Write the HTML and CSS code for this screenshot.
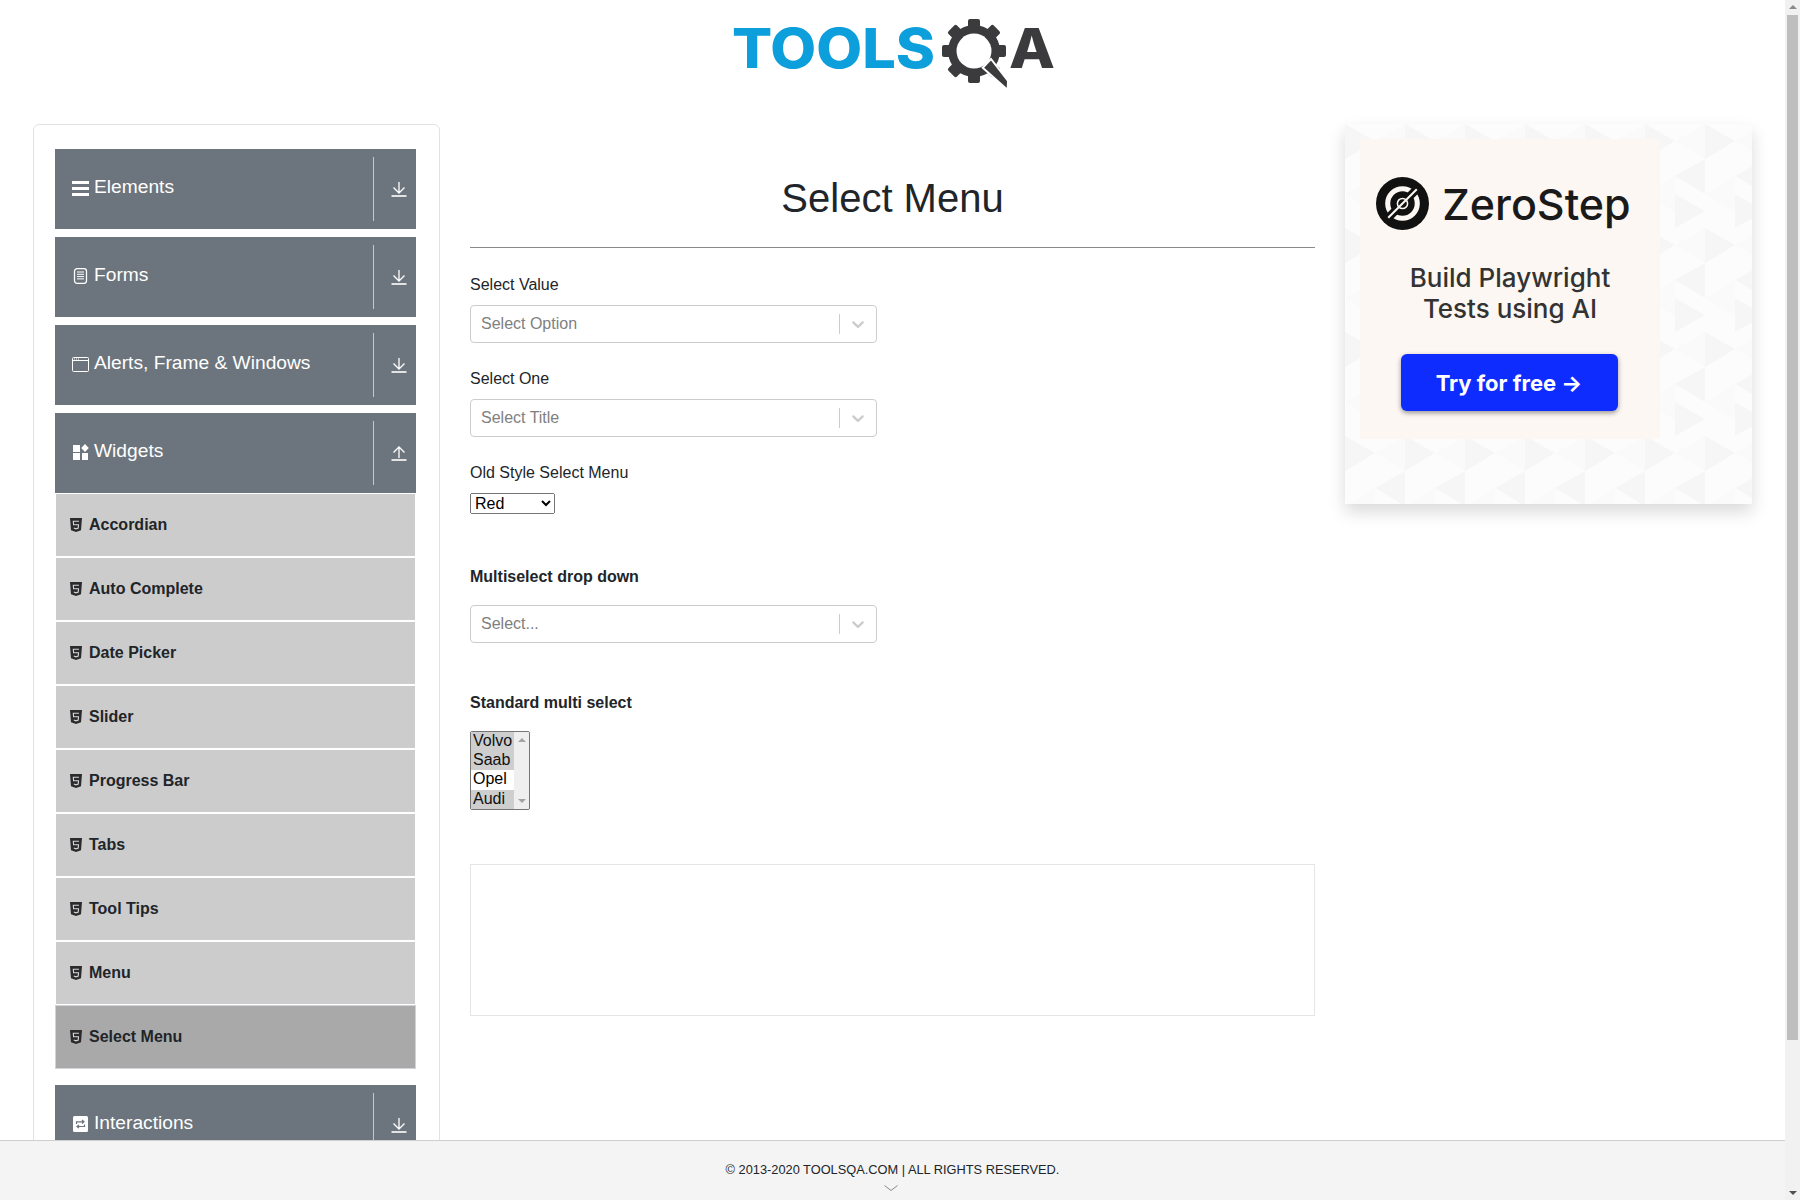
FILE: index.html
```html
<!DOCTYPE html>
<html lang="en">
<head>
    <meta charset="UTF-8">
    <title>ToolsQA</title>
    <link rel="stylesheet" href="styles.css">
</head>
<body>
    <svg class="iconDefs" width="0" height="0">
        <symbol id="down" viewBox="0 0 16 16"><path d="M8 1v10.500M2.500 6.500 8 12l5.500-5.500" fill="none" stroke="currentColor" stroke-width="1.300"/><path d="M.5 15h15" stroke="currentColor" stroke-width="1.600"/></symbol>
        <symbol id="up" viewBox="0 0 16 16"><path d="M8 13V2M2.500 7.500 8 2l5.500 5.500" fill="none" stroke="currentColor" stroke-width="1.300"/><path d="M.5 15h15" stroke="currentColor" stroke-width="1.600"/></symbol>
        <symbol id="html5" viewBox="0 0 12 14"><path d="M0 0h12l-1 12.300L6 14l-5-1.700z" fill="#2b2b2e"/><path d="M9 3.200H3.300l.3 3.500h4.900l-.3 3.300L6 10.800 3.800 10" fill="none" stroke="#d8d8d8" stroke-width="1.100"/></symbol>
        <symbol id="chev" viewBox="0 0 20 20"><path d="M4.516 7.548c.436-.446 1.043-.481 1.576 0L10 11.295l3.908-3.747c.533-.481 1.141-.446 1.574 0 .436.445.408 1.197 0 1.615-.406.418-4.695 4.502-4.695 4.502-.217.223-.502.335-.787.335s-.570-.112-.789-.335c0 0-4.287-4.084-4.695-4.502s-.436-1.170 0-1.615z"/></symbol>
        <pattern id="tri" width="60" height="104" patternUnits="userSpaceOnUse">
            <path d="M0 0 30 17 0 35zM60 35 30 52 60 70zM30 70 60 87 30 104z" fill="#f6f6f6"/>
            <path d="M30 17 60 0v35zM0 70l30-18v36z" fill="#fafafa"/>
        </pattern>
    </svg>

    <div class="scrollArea">
        <header class="topBar">
            <svg class="logo" viewBox="0 0 322 80" width="322" height="80">
                <text class="logoTools" x="-1" y="54" textLength="203" lengthAdjust="spacingAndGlyphs">TOOLS</text>
                <g class="gear" transform="translate(241 37)">
                    <circle r="26"/>
                    <rect x="-6" y="-32" width="12" height="64" rx="2"/>
                    <rect x="-6" y="-32" width="12" height="64" rx="2" transform="rotate(45)"/>
                    <rect x="-6" y="-32" width="12" height="64" rx="2" transform="rotate(90)"/>
                    <rect x="-6" y="-32" width="12" height="64" rx="2" transform="rotate(135)"/>
                    <circle r="17.500" fill="#fff"/>
                </g>
                <path class="handle" d="M258 45 249.700 53.700 274.700 76 275 67Z"/>
                <text class="logoA" x="276" y="54" textLength="46" lengthAdjust="spacingAndGlyphs">A</text>
            </svg>
        </header>

        <div class="pageBody">
            <aside class="sideCard">
                <div class="group">
                    <div class="groupHeader">
                        <span class="groupIcon">
                            <svg width="17" height="15" viewBox="0 0 17 15"><path d="M0 0h17v3H0zM0 6h17v3H0zM0 12h17v3H0z" fill="currentColor"/></svg>
                        </span>
                        <span class="groupName">Elements</span>
                        <span class="groupToggle"><svg width="16" height="16"><use href="#down"/></svg></span>
                    </div>
                </div>
                <div class="group">
                    <div class="groupHeader">
                        <span class="groupIcon">
                            <svg width="17" height="16" viewBox="0 0 17 16"><rect x="2.500" y=".7" width="12" height="14.600" rx="2.500" fill="none" stroke="currentColor" stroke-width="1.300"/><path d="M5 4h7M5 6.300h7M5 8.600h7M5 10.900h7" stroke="currentColor"/></svg>
                        </span>
                        <span class="groupName">Forms</span>
                        <span class="groupToggle"><svg width="16" height="16"><use href="#down"/></svg></span>
                    </div>
                </div>
                <div class="group">
                    <div class="groupHeader">
                        <span class="groupIcon">
                            <svg width="17" height="15" viewBox="0 0 17 15"><rect x=".5" y=".5" width="16" height="14" rx="1" fill="none" stroke="currentColor"/><path d="M.5 3.500h16" stroke="currentColor"/><path d="M2 2h1M4 2h1M6 2h1" stroke="currentColor"/></svg>
                        </span>
                        <span class="groupName">Alerts, Frame &amp; Windows</span>
                        <span class="groupToggle"><svg width="16" height="16"><use href="#down"/></svg></span>
                    </div>
                </div>
                <div class="group">
                    <div class="groupHeader">
                        <span class="groupIcon">
                            <svg width="17" height="16" viewBox="0 0 17 16"><path d="M1 1h7v7H1zM1 9h7v7H1zM10 9h6v7h-6zM13 0l3.800 4L13 8 9.200 4z" fill="currentColor"/></svg>
                        </span>
                        <span class="groupName">Widgets</span>
                        <span class="groupToggle"><svg width="16" height="16"><use href="#up"/></svg></span>
                    </div>
                    <ul class="menuList">
                        <li class="menuItem"><svg width="12" height="14"><use href="#html5"/></svg>Accordian</li>
                        <li class="menuItem"><svg width="12" height="14"><use href="#html5"/></svg>Auto Complete</li>
                        <li class="menuItem"><svg width="12" height="14"><use href="#html5"/></svg>Date Picker</li>
                        <li class="menuItem"><svg width="12" height="14"><use href="#html5"/></svg>Slider</li>
                        <li class="menuItem"><svg width="12" height="14"><use href="#html5"/></svg>Progress Bar</li>
                        <li class="menuItem"><svg width="12" height="14"><use href="#html5"/></svg>Tabs</li>
                        <li class="menuItem"><svg width="12" height="14"><use href="#html5"/></svg>Tool Tips</li>
                        <li class="menuItem"><svg width="12" height="14"><use href="#html5"/></svg>Menu</li>
                        <li class="menuItem active"><svg width="12" height="14"><use href="#html5"/></svg>Select Menu</li>
                    </ul>
                </div>
                <div class="group">
                    <div class="groupHeader">
                        <span class="groupIcon">
                            <svg width="17" height="16" viewBox="0 0 17 16"><rect x="1" width="15" height="16" rx="1.500" fill="currentColor"/><path d="M4.500 8V5.800h7M10 4l2 1.800L10 7.500M12.500 8.500v2h-7M7 9 5 10.500 7 12" fill="none" stroke="#6c757d" stroke-width="1.200"/></svg>
                        </span>
                        <span class="groupName">Interactions</span>
                        <span class="groupToggle"><svg width="16" height="16"><use href="#down"/></svg></span>
                    </div>
                </div>
            </aside>

            <main class="mainCol">
                <h1 class="pageTitle">Select Menu</h1>

                <div class="field">
                    <label class="fieldLabel">Select Value</label>
                    <div class="fakeSelect">
                        <span class="placeholder">Select Option</span>
                        <span class="fakeSep"></span>
                        <svg class="fakeChev" width="20" height="20"><use href="#chev"/></svg>
                    </div>
                </div>
                <div class="field">
                    <label class="fieldLabel">Select One</label>
                    <div class="fakeSelect">
                        <span class="placeholder">Select Title</span>
                        <span class="fakeSep"></span>
                        <svg class="fakeChev" width="20" height="20"><use href="#chev"/></svg>
                    </div>
                </div>
                <div class="field oldField">
                    <label class="fieldLabel" for="oldSelectMenu">Old Style Select Menu</label>
                    <select id="oldSelectMenu" class="nativeSelect">
                        <option>Red</option>
                        <option>Blue</option>
                        <option>Green</option>
                        <option>Yellow</option>
                        <option>Purple</option>
                        <option>Black</option>
                        <option>White</option>
                        <option>Voilet</option>
                        <option>Indigo</option>
                        <option>Magenta</option>
                        <option>Aqua</option>
                    </select>
                </div>
                <div class="field multiField">
                    <b class="fieldTitle">Multiselect drop down</b>
                    <div class="fakeSelect">
                        <span class="placeholder">Select...</span>
                        <span class="fakeSep"></span>
                        <svg class="fakeChev" width="20" height="20"><use href="#chev"/></svg>
                    </div>
                </div>
                <div class="field carsField">
                    <b class="fieldTitle">Standard multi select</b>
                    <div class="listWrap">
                        <select class="nativeList" multiple>
                            <option selected>Volvo</option>
                            <option selected>Saab</option>
                            <option>Opel</option>
                            <option selected>Audi</option>
                        </select>
                        <div class="listBar">
                            <span class="arrowUp"></span>
                            <span class="arrowDown"></span>
                        </div>
                    </div>
                </div>

                <div class="adSlot"></div>
            </main>

            <aside class="adCol">
                <div class="adCard">
                    <svg class="adPattern" width="100%" height="100%"><rect width="100%" height="100%" fill="url(#tri)"/></svg>
                    <div class="adInner">
                        <div class="adBrand">
                            <svg width="53" height="53" viewBox="0 0 52 52">
                                <circle cx="26" cy="26" r="26" fill="#111"/>
                                <circle cx="26" cy="26" r="14.500" fill="none" stroke="#fcf7f2" stroke-width="5"/>
                                <path d="M10 42 42 10" stroke="#111" stroke-width="8"/>
                                <path d="M12 40 40 12" stroke="#fcf7f2" stroke-width="2"/>
                                <circle cx="26" cy="26" r="5" fill="none" stroke="#fcf7f2" stroke-width="1.500"/>
                            </svg>
                            <span class="adName">ZeroStep</span>
                        </div>
                        <p class="adText">Build Playwright<br>Tests using AI</p>
                        <div class="adButton">Try for free →</div>
                    </div>
                </div>
            </aside>
        </div>
    </div>

    <div class="pageBar">
        <span class="arrowUp pageUp"></span>
        <span class="pageThumb"></span>
        <span class="arrowDown pageDown"></span>
    </div>

    <footer class="siteFooter">
        <span>© 2013-2020 TOOLSQA.COM | ALL RIGHTS RESERVED.</span>
        <svg class="footerChev" width="14" height="6" viewBox="0 0 14 6"><path d="M.5.5 7 5.500 13.500.5" fill="none" stroke="#888"/></svg>
    </footer>
</body>
</html>
```
FILE: styles.css
```css
* {
    box-sizing: border-box;
}

html, body {
    height: 100%;
}

body {
    margin: 0;
    overflow: hidden;
    font-family: "Liberation Sans", Arial, sans-serif;
    font-size: 16px;
    color: #212529;
    background-color: #ffffff;
}

.iconDefs {
    position: absolute;
}

.scrollArea {
    height: 100vh;
    margin-right: 15px;
    overflow: hidden;
}

.topBar {
    height: 124px;
    display: flex;
    justify-content: center;
    padding-top: 14px;
    padding-left: 3px;
}

.logo {
    display: block;
}

.logoTools {
    font-family: "Inter", sans-serif;
    font-weight: 800;
    font-size: 55px;
    fill: #0c9fdc;
}

.logoA {
    font-family: "Inter", sans-serif;
    font-weight: 800;
    font-size: 55px;
    fill: #3b3b3d;
}

.gear {
    fill: #3b3b3d;
}

.handle {
    fill: #3b3b3d;
    stroke: #ffffff;
    stroke-width: 2;
}

.pageBody {
    display: grid;
    grid-template-columns: 407px 1fr 407px;
    column-gap: 30px;
    padding: 0 33px;
}

/* left menu */
.sideCard {
    border: 1px solid #e2e2e2;
    border-radius: 6px;
    padding: 24px 23px 20px 21px;
}

.group {
    margin-bottom: 8px;
}

.group:nth-child(4) {
    margin-bottom: 16px;
}

.groupHeader {
    height: 80px;
    background-color: #6c757d;
    color: #ffffff;
    display: flex;
    align-items: center;
    padding: 8px 0;
}

.groupIcon {
    width: 22px;
    margin-left: 17px;
    margin-bottom: 2px;
    display: flex;
}

.groupName {
    flex: 1;
    font-size: 19.2px;
    margin-bottom: 4px;
}

.groupToggle {
    width: 43px;
    height: 64px;
    border-left: 1px solid #c4c8cc;
    display: flex;
    align-items: center;
    justify-content: center;
    padding-left: 7px;
}

.menuList {
    list-style: none;
    margin: 0;
    padding: 0;
}

.menuItem {
    height: 64px;
    background-color: #cccccc;
    border: 1px solid #ffffff;
    font-weight: 700;
    display: flex;
    align-items: center;
    gap: 7px;
    padding: 0 0 1px 14px;
}

.menuItem.active {
    background-color: #a9a9a9;
    border-color: #d0d3d8;
}

/* center form */
.pageTitle {
    margin: 0 0 28px;
    padding: 50px 0 15px;
    border-bottom: 1px solid #8a8a8a;
    text-align: center;
    font-size: 40px;
    font-weight: 400;
    line-height: 48px;
    height: 124px;
}

.field {
    height: 94px;
}

.fieldLabel,
.fieldTitle {
    display: block;
    margin-bottom: 11px;
    line-height: 18px;
}

.fakeSelect {
    width: 407px;
    height: 38px;
    border: 1px solid #cccccc;
    border-radius: 4px;
    display: flex;
    align-items: center;
    padding: 0 8px 0 10px;
}

.placeholder {
    flex: 1;
    color: #808080;
}

.fakeSep {
    width: 1px;
    height: 20px;
    background-color: #cccccc;
    margin-right: 8px;
}

.fakeChev {
    fill: #cccccc;
}

.nativeSelect {
    font-family: "Liberation Sans", Arial, sans-serif;
    font-size: 16px;
    display: block;
}

.oldField {
    height: 104px;
}

.multiField {
    height: 126px;
}

.multiField .fieldTitle {
    margin-bottom: 19px;
}

.carsField {
    height: 170px;
}

.carsField .fieldTitle {
    margin-bottom: 19px;
}

.listWrap {
    position: relative;
    width: 60px;
}

.nativeList {
    font-family: "Liberation Sans", Arial, sans-serif;
    font-size: 16px;
    display: block;
    width: 60px;
}

.listBar {
    position: absolute;
    top: 1px;
    right: 1px;
    bottom: 1px;
    width: 15px;
    background-color: #efefef;
    display: flex;
    flex-direction: column;
    justify-content: space-between;
    align-items: center;
    padding: 6px 0;
    border-radius: 0 2px 2px 0;
}

.arrowUp,
.arrowDown {
    display: block;
    width: 0;
    height: 0;
    border-left: 4px solid transparent;
    border-right: 4px solid transparent;
}

.arrowUp {
    border-bottom: 4px solid #a3a3a3;
}

.arrowDown {
    border-top: 4px solid #a3a3a3;
}

.adSlot {
    height: 152px;
    border: 1px solid #e5e5e5;
}

/* right banner */
.adCard {
    position: relative;
    height: 380px;
    background-color: #fcfcfc;
    box-shadow: 0 8px 16px rgba(0, 0, 0, 0.15);
    padding: 15px;
    overflow: hidden;
}

.adPattern {
    position: absolute;
    top: 0;
    left: 0;
}

.adInner {
    position: relative;
    width: 300px;
    height: 300px;
    background-color: #fcf7f2;
    padding-top: 38px;
    display: flex;
    flex-direction: column;
    align-items: center;
}

.adBrand {
    display: flex;
    align-items: center;
    gap: 13px;
    margin-right: 13px;
}

.adName {
    font-family: "Inter", sans-serif;
    font-size: 43px;
    font-weight: 500;
    color: #1a1a1a;
}

.adText {
    margin: 32px 0 0;
    font-family: "Inter", sans-serif;
    font-size: 26px;
    font-weight: 500;
    line-height: 31px;
    text-align: center;
    color: #333333;
}

.adButton {
    width: 217px;
    height: 57px;
    margin-top: 30px;
    margin-right: 2px;
    background-color: #0f2cff;
    border-radius: 6px;
    box-shadow: 0 2px 5px rgba(0, 0, 0, 0.4);
    color: #ffffff;
    font-family: "Inter", sans-serif;
    font-size: 22px;
    font-weight: 700;
    display: flex;
    align-items: center;
    justify-content: center;
}

/* page scrollbar */
.pageBar {
    position: fixed;
    top: 0;
    right: 0;
    bottom: 0;
    width: 15px;
    background-color: #f1f1f1;
    display: flex;
    flex-direction: column;
    align-items: center;
}

.pageUp {
    margin: 5px 0 6px;
    border-bottom-color: #8a8a8a;
}

.pageThumb {
    width: 11px;
    height: 1025px;
    background-color: #bebebe;
}

.pageDown {
    margin-top: auto;
    margin-bottom: 5px;
    border-top-color: #505050;
}

/* footer */
.siteFooter {
    position: fixed;
    left: 0;
    right: 15px;
    bottom: 0;
    height: 60px;
    background-color: #f4f4f4;
    border-top: 1px solid #cfcfcf;
    text-align: center;
    font-size: 12.8px;
    padding-top: 21px;
}

.siteFooter span {
    display: block;
    line-height: 16px;
}

.footerChev {
    display: block;
    margin: 7px auto 0;
    transform: translateX(-2px);
}
```
